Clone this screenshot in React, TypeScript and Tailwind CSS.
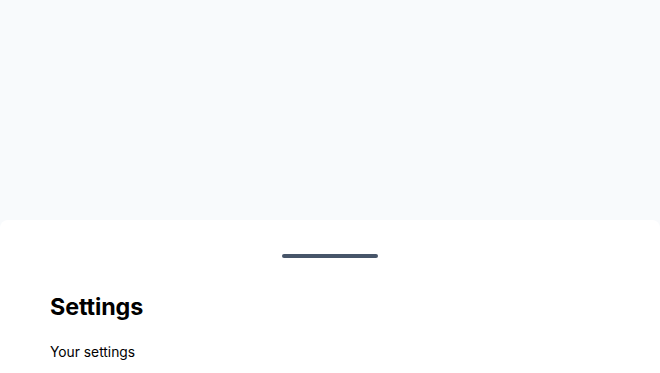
export default function App() {
  return (
    <div
      className="h-[373px] w-[660px] overflow-hidden bg-[#f8fafc]"
      style={{ fontFamily: "Inter, 'Liberation Sans', sans-serif" }}
    >
      <div className="h-[220px]" />
      <div className="flex h-[153px] flex-col rounded-t-[8px] bg-white">
        <div className="mx-auto mt-[34px] h-[4px] w-[96px] rounded-full bg-[#475569]" />
        <div className="px-[50px] pt-[33px]">
          <h2 className="text-[23.3px] font-bold leading-[32px] tracking-[-0.1px] text-black">Settings</h2>
          <p className="mt-[19px] text-[13.8px] leading-[20px] text-black">Your settings</p>
        </div>
      </div>
    </div>
  );
}
